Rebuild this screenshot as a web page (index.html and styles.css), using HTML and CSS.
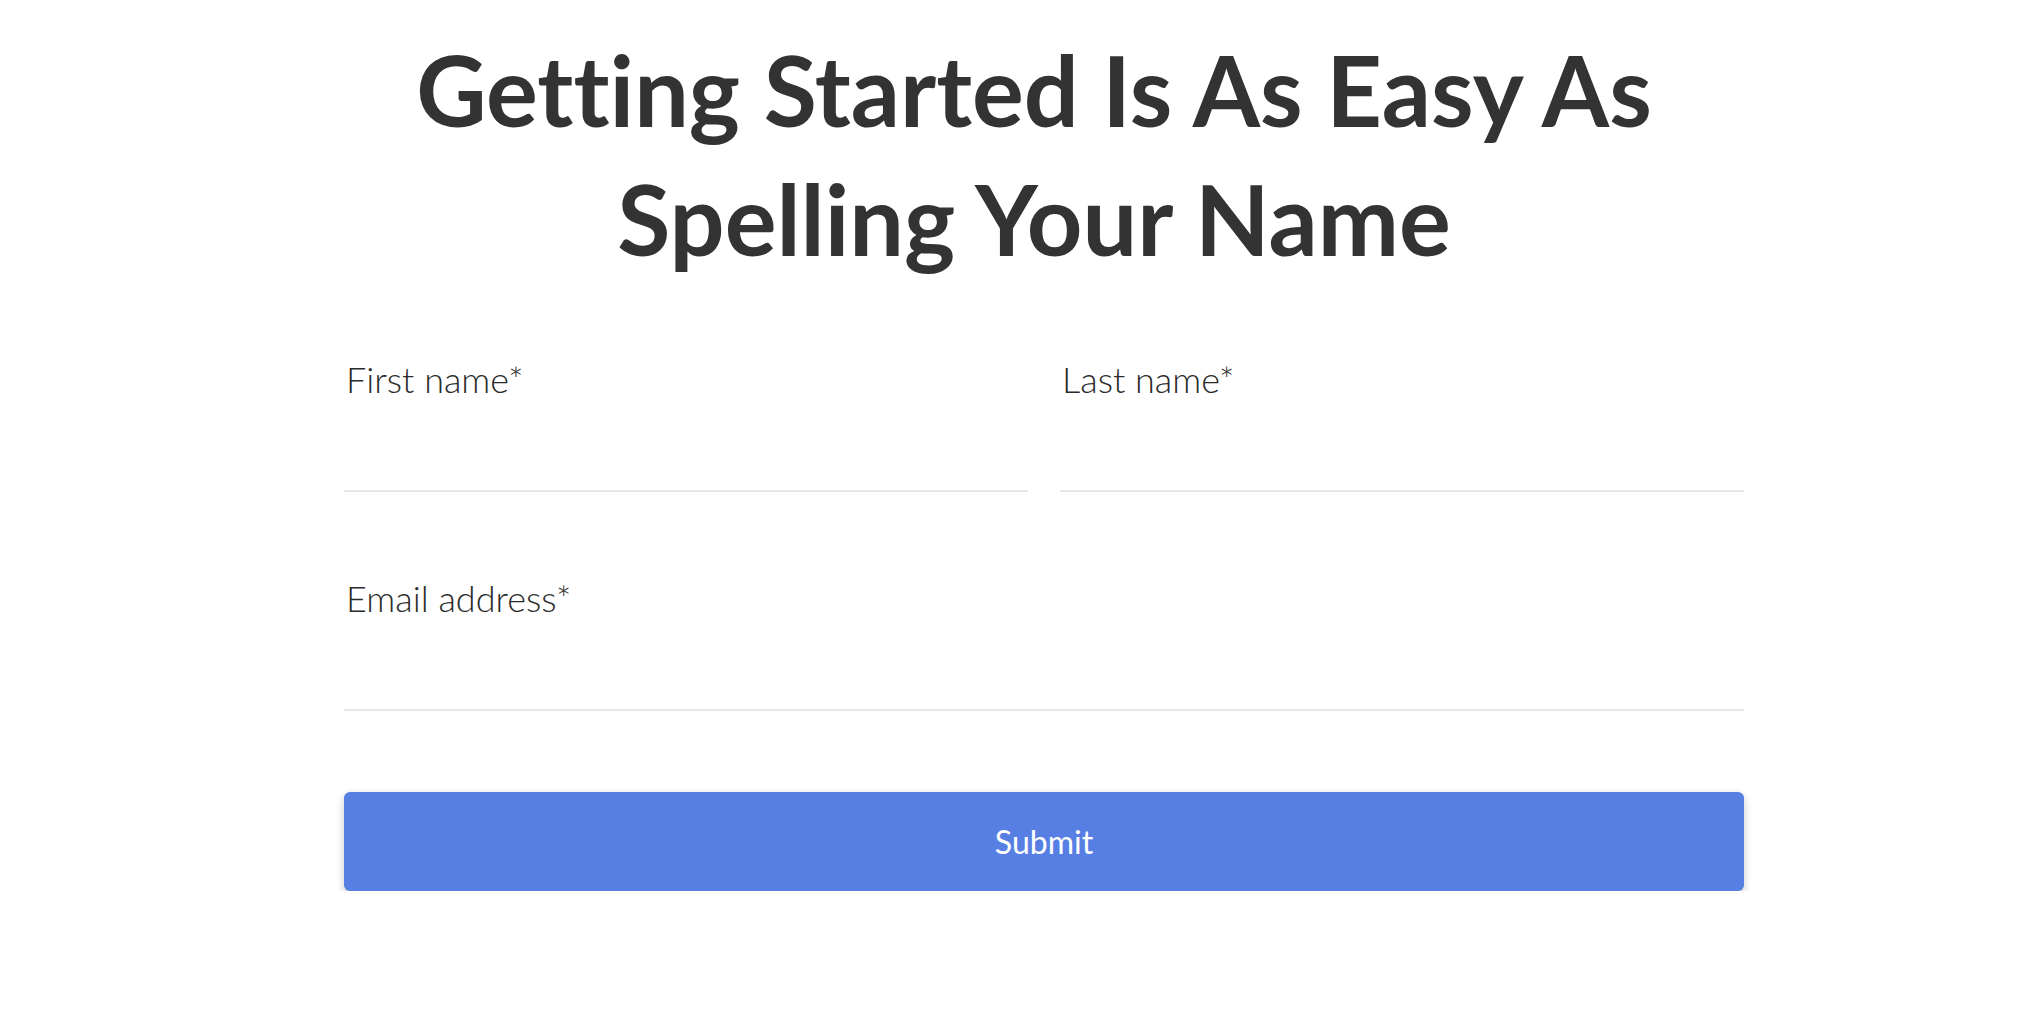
FILE: index.html
```html
<!DOCTYPE html>
<html lang="en">
<head>
<meta charset="utf-8">
<title>Getting Started</title>
<link rel="stylesheet" href="styles.css">
</head>
<body>
<main class="page">
  <h1 class="title">Getting Started Is As Easy As<br>Spelling Your Name</h1>
  <form class="form">
    <div class="row two">
      <label class="field">
        <span class="label">First name*</span>
        <input class="input" type="text">
      </label>
      <label class="field">
        <span class="label">Last name*</span>
        <input class="input" type="text">
      </label>
    </div>
    <div class="row">
      <label class="field">
        <span class="label">Email address*</span>
        <input class="input" type="email">
      </label>
    </div>
    <button class="submit" type="button">Submit</button>
  </form>
</main>
</body>
</html>
```

FILE: styles.css
```css
html, body {
  margin: 0;
  padding: 0;
  background: #fff;
}
body {
  font-family: Lato, "Liberation Sans", sans-serif;
  color: #333;
  padding-left: 62px;
  font-variant-ligatures: none;
}
.page {
  max-width: 1400px;
  margin: 0 auto;
}
.title {
  margin: 0;
  padding-top: 25px;
  padding-right: 20px;
  font-weight: 700;
  font-size: 97px;
  line-height: 129px;
  text-align: center;
  color: #333;
  font-variant-ligatures: none;
}
.form {
  margin-top: 74px;
  display: flex;
  flex-direction: column;
}
.row {
  display: flex;
  gap: 32px;
}
.field {
  flex: 1;
  display: flex;
  flex-direction: column;
}
.label {
  font-weight: 300;
  font-size: 36px;
  line-height: 44px;
  padding-left: 2px;
  color: #2a2a2a;
}
.input {
  box-sizing: border-box;
  border: 0;
  border-bottom: 2px solid #e8e8e8;
  height: 91px;
  padding: 0;
  margin: 0;
  outline: none;
  font: inherit;
  background: transparent;
}
.row + .row {
  margin-top: 84px;
}
.submit {
  margin-top: 81px;
  height: 99px;
  border: 0;
  border-radius: 6px;
  background: #577fe3;
  color: #fff;
  font-family: Lato, "Liberation Sans", sans-serif;
  font-weight: 400;
  font-size: 32px;
  box-shadow: 0 3px 8px rgba(0, 0, 0, 0.22);
  cursor: pointer;
}
```
